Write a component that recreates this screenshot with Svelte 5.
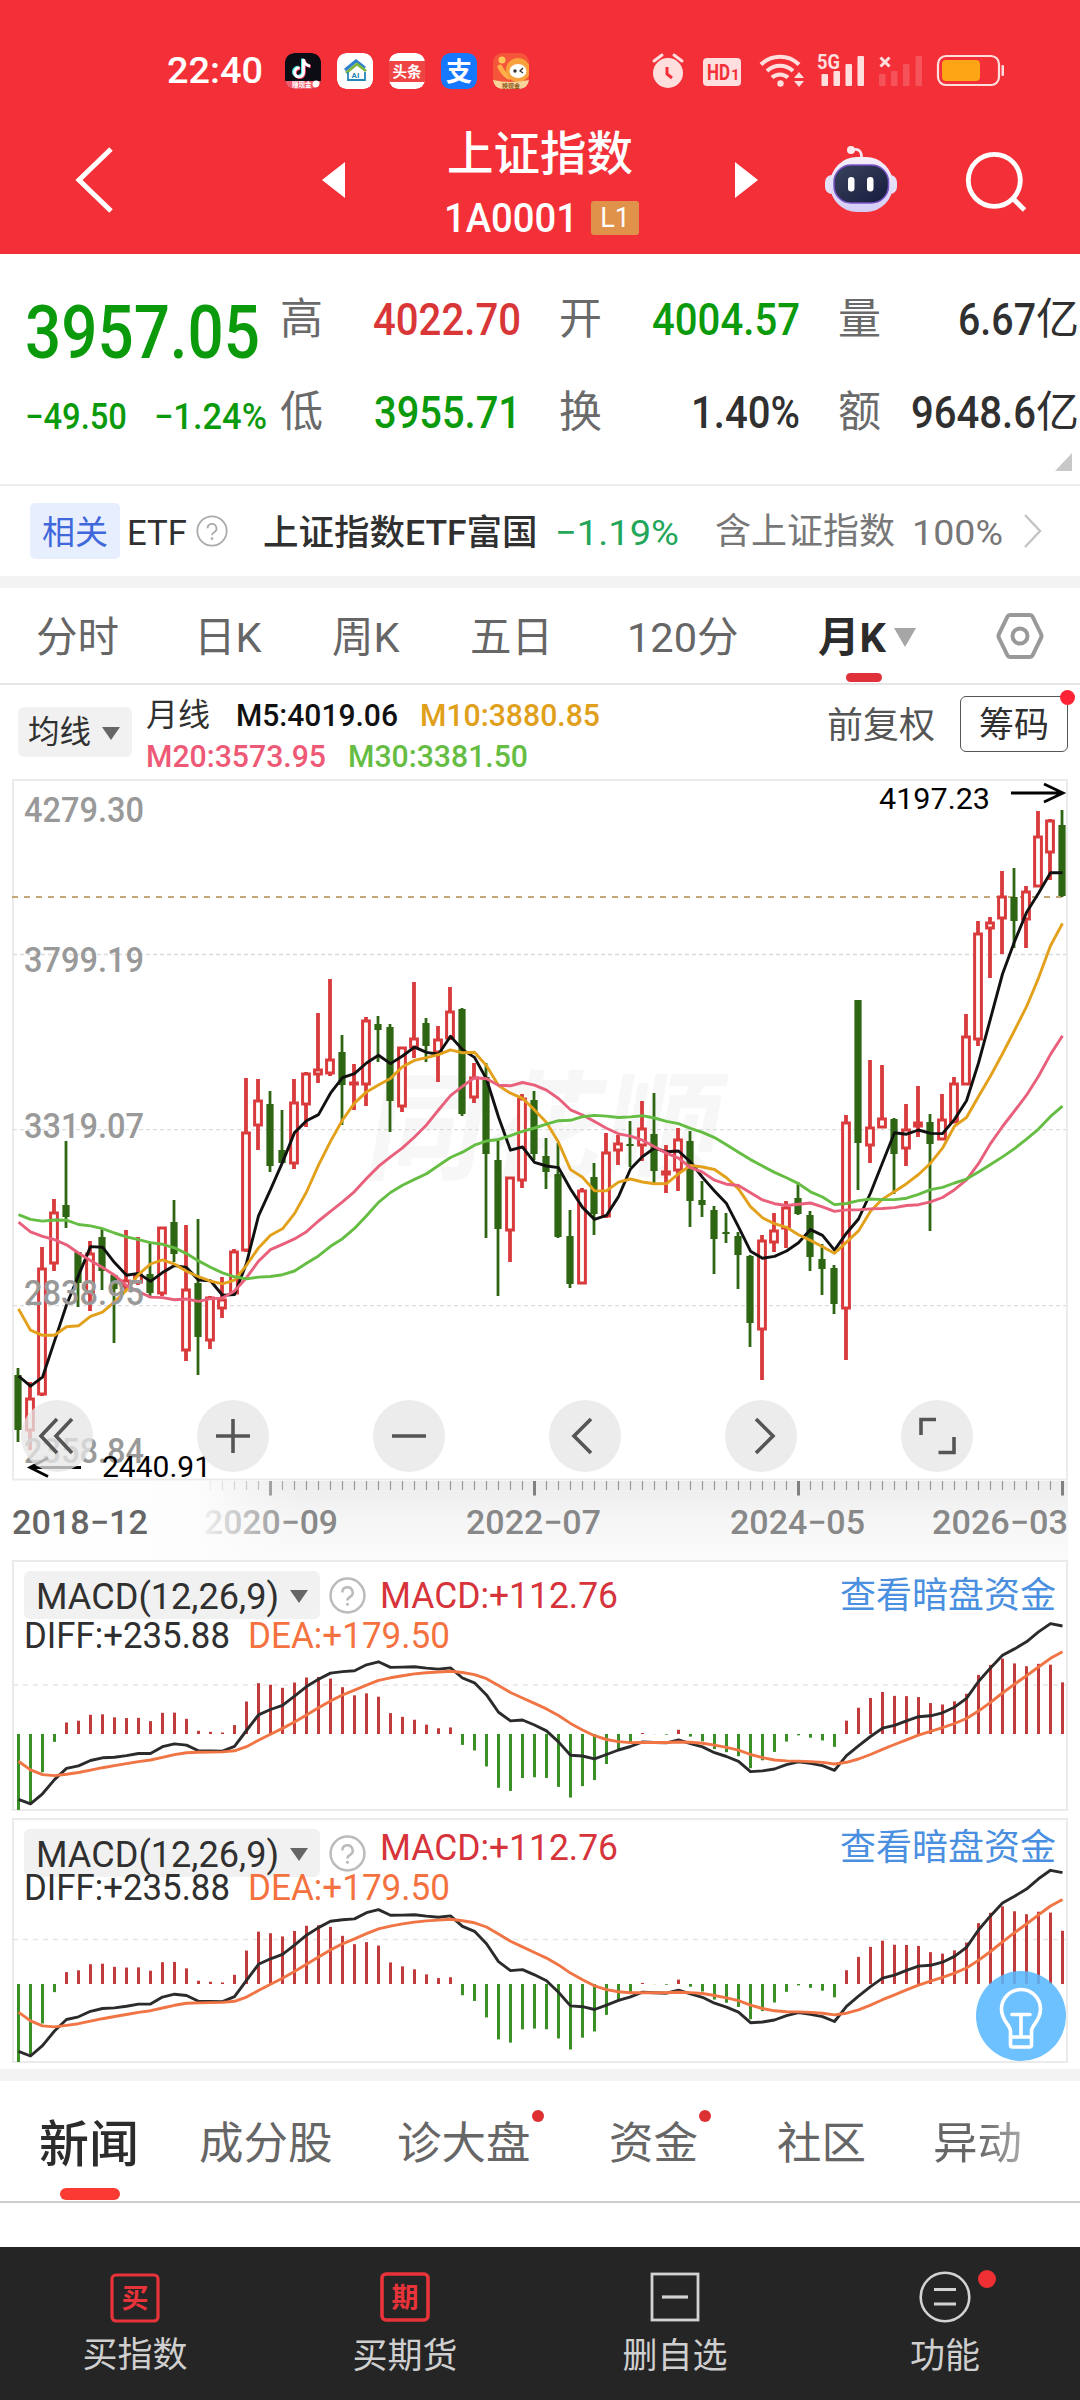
<!--
  Index quote page: header, quote summary, monthly candle chart with moving
  averages, two MACD panels and the bottom trade bar.

  Candles are kept in chart units (y grows downwards). Closes are turned into
  prices only where an indicator needs them.
-->
<script lang="ts">
  const STEP = 12;
  const X0 = 18;
  const GRID_PRICE = 3799.19;
  const GRID_Y = 954.4;
  const PER_PX = 2.7326;

  const toY = (p: number) => GRID_Y + (GRID_PRICE - p) / PER_PX;
  const toPrice = (y: number) => GRID_PRICE - (y - GRID_Y) * PER_PX;
  const xAt = (i: number) => X0 + i * STEP;

  // closes before the first visible month, needed to start the averages
  const history = [
    2979, 3085, 3004, 3100, 3250, 3103, 3159, 3241, 3222, 3154, 3117, 3192, 3273, 3360, 3348,
    3393, 3317, 3307, 3480, 3259, 3168, 3082, 3095, 2847, 2876, 2725, 2821, 2602, 2588,
  ];

  // direction, high, body top, body bottom, low
  const raw = `
    d 1368 1375 1430 1442|u 1382 1398 1430 1450|u 1247 1268 1394 1396|u 1199 1212 1263 1271
    d 1141 1205 1217 1228|d 1252 1252 1283 1307|u 1241 1253 1293 1311|d 1229 1237 1271 1290
    d 1275 1275 1289 1343|u 1230 1280 1286 1290|u 1237 1274 1282 1285|d 1243 1274 1293 1298
    u 1227 1227 1293 1296|d 1200 1222 1254 1262|u 1225 1289 1350 1361|d 1219 1283 1337 1375
    u 1296 1297 1340 1349|u 1277 1299 1308 1318|u 1249 1251 1293 1294|u 1078 1132 1250 1252
    u 1079 1100 1125 1150|d 1091 1104 1166 1172|d 1110 1150 1163 1163|u 1079 1102 1163 1169
    u 1072 1073 1104 1127|u 1013 1069 1074 1083|u 979 1059 1073 1076|d 1035 1052 1085 1125
    u 1064 1082 1084 1110|u 1017 1020 1084 1106|d 1016 1024 1030 1062|d 1024 1027 1101 1132
    u 1047 1047 1106 1112|u 982 1038 1047 1058|d 1018 1023 1046 1062|u 1026 1039 1052 1082
    u 987 1011 1038 1040|d 1008 1009 1114 1116|u 1063 1077 1097 1103|d 1063 1077 1154 1238
    d 1141 1160 1229 1296|u 1177 1177 1230 1262|u 1094 1098 1180 1188|d 1091 1100 1154 1160
    d 1138 1156 1172 1189|d 1143 1174 1237 1238|d 1210 1236 1284 1288|u 1188 1190 1283 1284
    d 1163 1177 1214 1235|u 1133 1152 1216 1218|u 1135 1143 1150 1165|d 1121 1144 1146 1167
    u 1101 1128 1145 1161|d 1093 1134 1171 1183|u 1145 1171 1174 1193|u 1128 1139 1170 1191
    d 1131 1141 1201 1227|d 1181 1200 1205 1217|d 1206 1210 1239 1274|d 1213 1232 1234 1243
    d 1232 1236 1255 1289|d 1255 1256 1323 1347|u 1235 1240 1329 1380|u 1213 1230 1242 1252
    u 1201 1207 1228 1248|d 1182 1198 1214 1215|d 1211 1215 1257 1271|d 1244 1259 1269 1295
    d 1265 1268 1304 1314|u 1115 1122 1308 1360|d 1000 1000 1143 1190|u 1060 1127 1145 1163
    u 1065 1118 1127 1128|d 1118 1119 1154 1194|u 1104 1129 1148 1166|u 1086 1122 1126 1137
    d 1114 1122 1144 1231|u 1094 1119 1139 1140|u 1077 1083 1122 1123|u 1014 1036 1084 1085
    u 921 933 1039 1046|u 917 922 928 978|u 871 896 918 954|d 868 897 921 948
    u 886 891 919 948|u 811 836 886 887|u 819 820 852 880|d 810 825 896 897`;

  const candles = raw
    .trim()
    .split(/\||\n/)
    .map((row) => {
      const [dir, ...n] = row.trim().split(' ');
      const [high, top, bottom, low] = n.map(Number);
      return { up: dir === 'u', high, top, bottom, low };
    });

  const closes = candles.map((c) => toPrice(c.up ? c.top : c.bottom));
  const all = [...history, ...closes];

  function average(period: number) {
    return closes
      .map((_, i) => {
        const end = history.length + i + 1;
        const sum = all.slice(end - period, end).reduce((a, b) => a + b, 0);
        return `${xAt(i) + 0.5},${toY(sum / period).toFixed(1)}`;
      })
      .join(' ');
  }

  const averages = [
    { color: '#111', points: average(5) },
    { color: '#e3a11b', points: average(10) },
    { color: '#e9607c', points: average(20) },
    { color: '#66bd43', points: average(30) },
  ];

  // MACD(12,26,9), seeded with the state of the first visible month
  let slow = 2989;
  let fast = slow - 142.6;
  let signal = -59.7;
  const macd = closes.map((c, i) => {
    if (i > 0) {
      fast += ((c - fast) * 2) / 13;
      slow += ((c - slow) * 2) / 27;
      signal += (fast - slow - signal) * 0.2;
    }
    return { diff: fast - slow, dea: signal, bar: (fast - slow - signal) * 2 };
  });

  const panels = [
    { height: 258, frame: 249, zero: 174, grid: 125, perPx: 2.184, tight: false },
    { height: 251, frame: 243, zero: 166, grid: 121.5, perPx: 2.12, tight: true },
  ];

  const line = (key: 'diff' | 'dea', zero: number, perPx: number) =>
    macd.map((m, i) => `${xAt(i) + 0.5},${(zero - m[key] / perPx).toFixed(1)}`).join(' ');

  const priceLabels = [
    { y: 822, text: '4279.30' },
    { y: 972, text: '3799.19' },
    { y: 1137.5, text: '3319.07' },
    { y: 1304.5, text: '2838.95' },
    { y: 1462.5, text: '2358.84' },
  ];

  const ticks = Array.from({ length: 72 }, (_, i) => i + 16);

  const stats = [
    { label: '高', value: '4022.70', width: 148, tone: 'up' },
    { label: '开', value: '4004.57', width: 148, tone: 'down' },
    { label: '量', value: '6.67', width: 78, unit: '亿', tone: '' },
    { label: '低', value: '3955.71', width: 147, tone: 'down' },
    { label: '换', value: '1.40%', width: 109, tone: '' },
    { label: '额', value: '9648.6', width: 125, unit: '亿', tone: '' },
  ];

  const periods = ['分时', '日K', '周K', '五日', '120分'];

  const news = [
    { text: '成分股', dot: false },
    { text: '诊大盘', dot: true },
    { text: '资金', dot: true },
    { text: '社区', dot: false },
    { text: '异动', dot: false },
  ];
</script>

<!-- digits set to a fixed width, caps centred in the box -->
{#snippet num(text: string, width: number)}
  <svg class="num" {width}>
    <text x="0" y="0.955em" textLength={width} lengthAdjust="spacingAndGlyphs">{text}</text>
  </svg>
{/snippet}

{#snippet help(size: number, stroke: number)}
  <svg class="help" width={size} height={size} viewBox="0 0 36 36">
    <circle cx="18" cy="18" r="16.5" fill="none" stroke="currentColor" stroke-width={stroke} />
    <path d="M13 15a5 5 0 1 1 7.5 4.3c-1.8 1-2.5 1.8-2.5 3.6" fill="none" stroke="currentColor" stroke-width={stroke} />
    <circle cx="18" cy="26.5" r="1.5" fill="currentColor" />
  </svg>
{/snippet}

<div class="page">
  <header>
    <div class="status">
      <span class="time">{@render num('22:40', 96)}</span>
      <div class="apps">
        <svg viewBox="0 0 36 36">
          <rect width="36" height="36" rx="9" fill="#0b0c14" />
          <path d="M0 28h36a9 9 0 0 1-9 8H9a9 9 0 0 1-9-8z" fill="#ef5a6d" />
          <path d="M18.5 6v13.5a4.5 4.5 0 1 1-4-4.5M18.5 7c1 4 3 5.5 6.5 6" transform="translate(-1 -.6)" fill="none" stroke="#45e5e6" stroke-width="3" />
          <path d="M18.5 6v13.5a4.5 4.5 0 1 1-4-4.5M18.5 7c1 4 3 5.5 6.5 6" transform="translate(.8 .6)" fill="none" stroke="#f3486d" stroke-width="3" />
          <path d="M18.5 6v13.5a4.5 4.5 0 1 1-4-4.5M18.5 7c1 4 3 5.5 6.5 6" fill="none" stroke="#fff" stroke-width="2.8" />
          <text x="7" y="34" font-size="6.5" font-weight="700" fill="#fff">赚现金</text>
          <circle cx="31" cy="31" r="3.5" fill="#fff" />
        </svg>
        <svg viewBox="0 0 36 36">
          <rect width="36" height="36" rx="9" fill="#fff" />
          <path d="M8 17 19 8l9 7" fill="none" stroke="#2d7fd0" stroke-width="3" />
          <path d="M9 20 20 11l9 7" fill="none" stroke="#7bb63c" stroke-width="2.8" />
          <path d="M11 19v8h17v-8" fill="none" stroke="#2485b8" stroke-width="1.8" />
          <text x="14.5" y="25" font-size="8" font-weight="700" fill="#2485b8">AI</text>
        </svg>
        <svg viewBox="0 0 36 36">
          <rect width="36" height="36" rx="9" fill="#fff" />
          <path d="M0 8h36v21H0z" fill="#ef4444" />
          <text x="3.5" y="23.5" font-size="14.5" font-weight="700" fill="#fff">头条</text>
        </svg>
        <svg viewBox="0 0 36 36">
          <rect width="36" height="36" rx="9" fill="#1677ff" />
          <text x="5" y="27.5" font-size="26" font-weight="700" fill="#fff">支</text>
        </svg>
        <svg viewBox="0 0 36 36">
          <rect width="36" height="36" rx="9" fill="#f5553a" />
          <circle cx="9" cy="7" r="3.5" fill="#ffc85a" />
          <path d="M7 14q4 8 9 10" stroke="#ffb04a" stroke-width="5" fill="none" stroke-linecap="round" />
          <circle cx="25" cy="17" r="12" fill="#f9a13c" />
          <ellipse cx="25" cy="18" rx="8.5" ry="7" fill="#fff" />
          <circle cx="22" cy="18" r="1.7" fill="#333" />
          <path d="m30 15-3 3 3 2" stroke="#333" stroke-width="1.3" fill="none" />
          <path d="M0 27q18 4 36 0a9 9 0 0 1-9 9H9a9 9 0 0 1-9-9z" fill="#f8d49a" />
          <text x="9" y="34.5" font-size="6" font-weight="700" fill="#8a5a20">换现金</text>
        </svg>
      </div>
      <svg class="signals" width="380" height="60" viewBox="0 0 380 60" fill="#ffdede">
        <circle cx="28" cy="33" r="15" />
        <path d="m14 21 8-6M34 15l8 6" stroke="#ffdede" stroke-width="3" stroke-linecap="round" />
        <path d="M27 27v7l5 4" fill="none" stroke="#f33038" stroke-width="3" />
        <rect x="63" y="18" width="38" height="28" rx="4" />
        <text x="67" y="40" font-size="22" font-weight="700" fill="#f33038" textLength="23" lengthAdjust="spacingAndGlyphs">HD</text>
        <text x="91" y="40" font-size="15" font-weight="700" fill="#f33038">1</text>
        <g fill="none" stroke="#ffdede" stroke-width="4">
          <path d="M121 24.5a27 27 0 0 1 38 0" />
          <path d="M127 31a19 19 0 0 1 26 0" />
          <path d="M132 37.5a12 12 0 0 1 16 0" />
        </g>
        <circle cx="140.5" cy="43.5" r="3.2" />
        <path d="M154 38h10l-5-6zM154 41h10l-5 6z" />
        <text x="177" y="29" font-size="21" font-weight="700" textLength="23" lengthAdjust="spacingAndGlyphs">5G</text>
        <rect x="181.5" y="34" width="6.5" height="12" rx="1" />
        <rect x="193.5" y="31" width="6.5" height="15" rx="1" />
        <rect x="205.5" y="24" width="6.5" height="22" rx="1" />
        <rect x="217.5" y="16" width="6.5" height="30" rx="1" />
        <path d="m240.500 17.500 9 9m0-9-9 9" stroke="#ffdede" stroke-width="3" />
        <g opacity="0.2">
          <rect x="239" y="34" width="6.500" height="12" rx="1" />
          <rect x="251" y="31" width="6.500" height="15" rx="1" />
          <rect x="263" y="24" width="6.500" height="22" rx="1" />
          <rect x="275.500" y="16" width="6.500" height="30" rx="1" />
        </g>
        <rect x="298" y="16" width="61" height="29" rx="8" fill="none" stroke="#ffdede" stroke-width="2.200" />
        <rect x="302" y="20" width="38" height="21" rx="4" fill="#fda514" />
        <rect x="361.500" y="25" width="2.500" height="11" rx="1" />
      </svg>
    </div>

    <nav>
      <svg class="back" width="50" height="70" viewBox="0 0 50 70">
        <path d="M41 4 9 35l32 31" fill="none" stroke="#fff" stroke-width="5" />
      </svg>
      <svg width="23" height="36" viewBox="0 0 23 36"><path d="M23 0v36L0 18z" fill="#fff" /></svg>
      <div class="title">
        <h1>上证指数</h1>
        <div class="code">{@render num('1A0001', 134)}<span class="level">L1</span></div>
      </div>
      <svg width="23" height="36" viewBox="0 0 23 36"><path d="M0 0v36l23-18z" fill="#fff" /></svg>
      <svg class="robot" width="80" height="100" viewBox="0 0 80 100">
        <defs>
          <linearGradient id="shell" x1="0" y1="0" x2="0" y2="1">
            <stop offset="0" stop-color="#f6f0fa" />
            <stop offset="1" stop-color="#d3cdf6" />
          </linearGradient>
          <linearGradient id="visor" x1="0" y1="0" x2="1" y2="1">
            <stop offset="0" stop-color="#39425f" />
            <stop offset="1" stop-color="#161c3c" />
          </linearGradient>
        </defs>
        <path d="M31 20q11-3 10.500 8" fill="none" stroke="#f3e6ee" stroke-width="2.800" />
        <circle cx="31" cy="20" r="4" fill="#fbe9ee" />
        <rect x="5" y="45" width="72" height="19" rx="7" fill="#e6e0f6" />
        <rect x="10" y="27" width="63" height="55" rx="27" fill="url(#shell)" />
        <rect x="14" y="35" width="54.500" height="38" rx="17" fill="url(#visor)" stroke="#7a55c8" stroke-width="1.500" />
        <rect x="28" y="47" width="6.500" height="14.500" rx="3.200" fill="#fff" />
        <rect x="47" y="47" width="6.500" height="14.500" rx="3.200" fill="#fff" />
      </svg>
      <svg class="search" width="66" height="100" viewBox="0 0 66 100" fill="none" stroke="#fff">
        <circle cx="32.300" cy="50.300" r="26" stroke-width="4.800" />
        <path d="m51.500 69 11 11" stroke-width="4.800" />
      </svg>
    </nav>
  </header>

  <section class="quote">
    <div class="last">
      <div class="price">{@render num('3957.05', 235)}</div>
      <div class="change">{@render num('−49.50', 102)}{@render num('−1.24%', 113)}</div>
    </div>
    <div class="stats">
      {#each stats as s}
        <div class="stat">
          <span class="label">{s.label}</span>
          <span class="value {s.tone}">{@render num(s.value, s.width)}{#if s.unit}<i>{s.unit}</i>{/if}</span>
        </div>
      {/each}
    </div>
    <svg class="corner" width="17" height="18" viewBox="0 0 17 18"><path d="M17 0v18H0z" fill="#c8c8c8" /></svg>
  </section>

  <section class="related">
    <span class="badge">相关</span>
    <span class="etf">{@render num('ETF', 60)}</span>
    {@render help(32, 2)}
    <span class="fund">上证指数ETF富国</span>
    <span class="pct">{@render num('−1.19%', 124)}</span>
    <span class="holds">含上证指数</span>
    <span class="share">{@render num('100%', 91)}</span>
    <svg class="more" width="20" height="36" viewBox="0 0 20 36">
      <path d="m2 2 15 16L2 34" fill="none" stroke="#c4c4c4" stroke-width="2.500" />
    </svg>
  </section>

  <div class="periods">
    {#each periods as p}
      <span>{p}</span>
    {/each}
    <span class="current">月K<svg width="24" height="19" viewBox="0 0 24 19"><path d="M1 0h22L12 19z" fill="#a6a6a6" /></svg></span>
    <svg class="settings" width="56" height="50" viewBox="0 0 56 50" fill="none" stroke="#999" stroke-width="4" stroke-linejoin="round">
      <path d="M18 4h20a3 3 0 0 1 2.500 1.500L49 23q1 2 0 4l-8.500 17.500A3 3 0 0 1 38 46H18a3 3 0 0 1-2.500-1.500L7 27q-1-2 0-4l8.500-17.500A3 3 0 0 1 18 4z" />
      <circle cx="28" cy="25" r="7.500" />
    </svg>
  </div>

  <div class="legend">
    <span class="pill">均线<svg width="18" height="13" viewBox="0 0 18 13"><path d="M0 0h18L9 13z" fill="#666" /></svg></span>
    <div class="averages">
      <div>
        <span class="name">月线</span>
        <span class="m5">{@render num('M5:4019.06', 162)}</span>
        <span class="m10">{@render num('M10:3880.85', 180)}</span>
      </div>
      <div>
        <span class="m20">{@render num('M20:3573.95', 180)}</span>
        <span class="m30">{@render num('M30:3381.50', 180)}</span>
      </div>
    </div>
    <span class="adjust">前复权</span>
    <span class="chips">筹码</span>
  </div>

  <div class="chart">
    <svg width="1080" height="782" viewBox="0 778 1080 782">
      <defs>
        <linearGradient id="axis" x1="0" y1="0" x2="0" y2="1">
          <stop offset="0" stop-color="#ececec" />
          <stop offset="0.5" stop-color="#f6f6f6" />
          <stop offset="1" stop-color="#fbfbfb" />
        </linearGradient>
        <linearGradient id="fade" x1="0" x2="1" y1="0" y2="0">
          <stop offset="0" stop-color="#fff" />
          <stop offset="0.64" stop-color="#fdfdfd" />
          <stop offset="1" stop-color="#fafafa" stop-opacity="0" />
        </linearGradient>
      </defs>

      <text class="watermark" x="0" y="0" transform="translate(362 1170) skewX(-10)">同花顺</text>

      <rect x="13" y="780" width="1054" height="699.500" fill="none" stroke="#ebebeb" stroke-width="2" />
      {#each [954.5, 1129.7, 1305.7] as y}
        <line x1="13" x2="1066" y1={y} y2={y} stroke="#dcdcdc" stroke-width="1.300" stroke-dasharray="4 3" />
      {/each}
      <line x1="12" x2="1066" y1="897" y2="897" stroke="#c2a878" stroke-width="1.800" stroke-dasharray="6 6" />

      {#each candles as c, i}
        {#if c.up}
          <path d="M{xAt(i)} {c.high}V{c.top}M{xAt(i)} {c.bottom}V{c.low}" stroke="#d93a3c" stroke-width="3.800" />
          <rect x={xAt(i) - 3.4} y={c.top + 1} width="6.800" height={Math.max(c.bottom - c.top - 1, 1)} fill="#fff" stroke="#d93a3c" stroke-width="3" />
        {:else}
          <path d="M{xAt(i)} {c.high}V{c.low}" stroke="#2f6613" stroke-width="2.800" />
          <rect x={xAt(i) - 3.6} y={c.top} width="7.200" height={c.bottom - c.top} fill="#2f6613" />
        {/if}
      {/each}

      {#each averages as a}
        <polyline points={a.points} fill="none" stroke={a.color} stroke-width="2.900" stroke-linejoin="round" />
      {/each}

      {#each priceLabels as l}
        <text class="tick" x="24" y={l.y} textLength="120" lengthAdjust="spacingAndGlyphs">{l.text}</text>
      {/each}

      <text class="extreme" x="879" y="809" textLength="111" lengthAdjust="spacingAndGlyphs">4197.23</text>
      <path d="M1011 793h51M1044 784l19 9-19 9" fill="none" stroke="#000" stroke-width="2.800" />
      <text class="extreme" x="102" y="1476.500" textLength="109" lengthAdjust="spacingAndGlyphs">2440.91</text>
      <path d="M81 1467.500H31M48 1458l-18 9.500 18 9" fill="none" stroke="#000" stroke-width="2.800" />

      <rect x="12" y="1481" width="1056" height="79" fill="url(#axis)" />
      {#each ticks as i}
        {#if i % 22 === 21}
          <line x1={xAt(i) + 0.5} x2={xAt(i) + 0.5} y1="1481" y2="1495.500" stroke="#808080" stroke-width="3" />
        {:else}
          <line x1={xAt(i) + 0.5} x2={xAt(i) + 0.5} y1="1481" y2="1490" stroke="#999" stroke-width="1.200" />
        {/if}
      {/each}
      <text class="date" x="204" y="1533.500" textLength="134" lengthAdjust="spacingAndGlyphs">2020−09</text>
      <text class="date" x="466" y="1533.500" textLength="135" lengthAdjust="spacingAndGlyphs">2022−07</text>
      <text class="date" x="730" y="1533.500" textLength="135" lengthAdjust="spacingAndGlyphs">2024−05</text>
      <text class="date" x="932" y="1533.500" textLength="136" lengthAdjust="spacingAndGlyphs">2026−03</text>
      <rect x="0" y="1481" width="300" height="79" fill="url(#fade)" />
      <text class="date first" x="12" y="1533.500" textLength="136" lengthAdjust="spacingAndGlyphs">2018−12</text>
    </svg>

    <div class="tools">
      <button aria-label="最早"><svg viewBox="0 0 72 72"><path d="M36 19 20 36l16 17M51 19 35 36l16 17" /></svg></button>
      <button aria-label="放大"><svg viewBox="0 0 72 72"><path d="M19 36h34M36 19v34" /></svg></button>
      <button aria-label="缩小"><svg viewBox="0 0 72 72"><path d="M19 36h34" /></svg></button>
      <button aria-label="左移"><svg viewBox="0 0 72 72"><path d="M42 19 25 36l17 17" /></svg></button>
      <button aria-label="右移"><svg viewBox="0 0 72 72"><path d="m31 19 17 17-17 17" /></svg></button>
      <button aria-label="全屏"><svg viewBox="0 0 72 72"><path d="M35 19.500H20V35M37.500 52.500H53V37" /></svg></button>
    </div>
  </div>

  {#each panels as p}
    <section class="panel" class:tight={p.tight} style:height="{p.height}px">
      <svg class="plot" width="1080" height={p.height}>
        <rect x="13" y="1" width="1054" height={p.frame} fill="none" stroke="#ebebeb" stroke-width="2" />
        <line x1="13" x2="1066" y1={p.grid} y2={p.grid} stroke="#e6e6e6" stroke-width="1.300" stroke-dasharray="5 5" />
        {#each macd as m, i}
          <line
            x1={xAt(i) + 0.5}
            x2={xAt(i) + 0.5}
            y1={p.zero}
            y2={Math.min(p.zero - m.bar / p.perPx, p.frame + 1)}
            stroke={m.bar > 0 ? '#c13b3d' : '#3b8f27'}
            stroke-width="3"
          />
        {/each}
        <polyline points={line('diff', p.zero, p.perPx)} fill="none" stroke="#2b2b2b" stroke-width="2.900" stroke-linejoin="round" />
        <polyline points={line('dea', p.zero, p.perPx)} fill="none" stroke="#f07444" stroke-width="2.900" stroke-linejoin="round" />
      </svg>
      <div class="head">
        <span class="pill">{@render num('MACD(12,26,9)', 243)}<svg width="18" height="13" viewBox="0 0 18 13"><path d="M0 0h18L9 13z" fill="#666" /></svg></span>
        {@render help(37, 2.4)}
        <span class="macd">{@render num('MACD:+112.76', 238)}</span>
        <a href="#dark">查看暗盘资金</a>
      </div>
      <div class="values">
        <span>{@render num('DIFF:+235.88', 206)}</span>
        <span class="dea">{@render num('DEA:+179.50', 202)}</span>
      </div>
      {#if p.tight}
        <div class="bulb">
          <svg width="90" height="90" viewBox="0 0 90 90" fill="none" stroke="#fff" stroke-width="3.600" stroke-linecap="round" stroke-linejoin="round">
            <path d="M34.500 74V60c0-6-9-10-9-22a19.500 19.500 0 0 1 39 0c0 12-9 16-9 22v14a2 2 0 0 1-2 2h-17a2 2 0 0 1-2-2zM35 66h20M36 43.500h18M45 44v21" />
          </svg>
        </div>
      {/if}
    </section>
  {/each}

  <div class="news">
    <span class="current">新闻</span>
    {#each news as n}
      <span class:dot={n.dot}>{n.text}</span>
    {/each}
  </div>

  <footer>
    <div>
      <svg class="low" width="50" height="52" viewBox="0 0 50 52">
        <rect x="2" y="4" width="46" height="46" rx="4" fill="none" stroke="#e8333a" stroke-width="3.200" />
        <text x="11.500" y="37" font-size="27" font-weight="700" fill="#e8333a">买</text>
      </svg>
      <span>买指数</span>
    </div>
    <div>
      <svg width="50" height="52" viewBox="0 0 50 52">
        <rect x="2" y="3" width="46" height="46" rx="4" fill="none" stroke="#e8333a" stroke-width="3.600" />
        <text x="11.500" y="36" font-size="27" font-weight="700" fill="#e8333a">期</text>
      </svg>
      <span>买期货</span>
    </div>
    <div>
      <svg width="50" height="52" viewBox="0 0 50 52" fill="none" stroke="#d2d2d2">
        <rect x="2" y="3" width="46" height="46" stroke-width="2.800" />
        <path d="M12 26h26" stroke-width="3.200" />
      </svg>
      <span>删自选</span>
    </div>
    <div class="dot">
      <svg width="52" height="52" viewBox="0 0 52 52" fill="none" stroke="#d2d2d2">
        <circle cx="26" cy="26" r="24.300" stroke-width="2.600" />
        <path d="M15 18.500h22M15 33h22" stroke-width="3.200" />
      </svg>
      <span>功能</span>
    </div>
  </footer>
</div>

<style>
  :global(body) {
    background: #fff;
  }
  .page {
    width: 1080px;
    height: 2400px;
    overflow: hidden;
    background: #fff;
    color: #303030;
    font-family: Roboto, 'Noto Sans CJK SC', sans-serif;
    line-height: 1.2;
  }
  .page * { box-sizing: border-box; }
  svg { flex: none; display: block; }
  span, a, h1 { white-space: nowrap; }
  .num {
    height: 1.2em;
    overflow: visible;
    fill: currentColor;
  }

  header {
    height: 254px;
    background: #f33038;
    color: #fff;
  }
  .status {
    height: 106px;
    padding: 34px 0 0 167px;
    display: flex;
    align-items: center;
  }
  .time { font-size: 37px; font-weight: 500; }
  .apps {
    display: flex;
    gap: 16px;
    margin: 2px 0 0 22px;
    width: 355px;
  }
  .apps svg { width: 36px; height: 36px; border-radius: 9px; overflow: hidden; }
  nav {
    height: 148px;
    display: flex;
    align-items: center;
    padding-left: 70px;
  }
  .back { margin-right: 202px; }
  .title {
    width: 390px;
    display: flex;
    flex-direction: column;
    align-items: center;
    gap: 14px;
    padding-top: 5px;
  }
  h1 {
    margin: 0;
    font-size: 46.5px;
    font-weight: 500;
    line-height: 56px;
  }
  .code {
    display: flex;
    align-items: center;
    gap: 13px;
    height: 44px;
    padding-left: 3px;
    font-size: 41px;
    font-weight: 500;
  }
  .level {
    width: 48px;
    height: 34px;
    border-radius: 3px;
    background: #e0914a;
    font-size: 27px;
    font-weight: 400;
    line-height: 34px;
    text-align: center;
  }
  .robot { margin-left: 62px; }
  .search { margin-left: 62px; }

  .quote {
    position: relative;
    height: 232px;
    display: flex;
    border-bottom: 2px solid #ededed;
  }
  .last {
    width: 281px;
    padding: 34px 0 0 25px;
    color: #0b9a0b;
    font-weight: 500;
  }
  .price {
    height: 86px;
    display: flex;
    align-items: center;
    font-size: 74px;
  }
  .change {
    height: 86px;
    display: flex;
    align-items: center;
    gap: 27px;
    font-size: 36px;
  }
  .stats {
    display: grid;
    grid-template-columns: repeat(3, 241px);
    grid-auto-rows: 93px;
    column-gap: 38px;
    padding-top: 18px;
    margin-left: -1px;
  }
  .stat {
    display: flex;
    align-items: center;
    justify-content: space-between;
  }
  .stat .label { padding-top: 3px; font-size: 43px; color: #6a6a6a; }
  .value {
    display: flex;
    align-items: center;
    font-size: 45px;
    font-weight: 500;
  }
  .value i { padding-top: 3px; font-style: normal; font-size: 43px; font-weight: 400; }
  .up { color: #d93638; }
  .down { color: #0b9a0b; }
  .corner { position: absolute; right: 8px; bottom: 13px; }

  .related {
    height: 90px;
    display: flex;
    align-items: center;
    padding-left: 30px;
    font-size: 35.5px;
  }
  .badge {
    width: 90px;
    height: 56px;
    border-radius: 5px;
    background: #e7eefe;
    color: #3f68dc;
    font-size: 33px;
    line-height: 59px;
    text-align: center;
  }
  .etf { margin-left: 7px; padding-top: 2px; }
  .related .help { margin-left: 9px; color: #aaa; }
  .fund { margin-left: 35px; padding-top: 4px; width: 275px; font-weight: 500; font-size: 35.5px; }
  .pct { margin-left: 17px; padding-top: 2px; color: #23a659; }
  .holds { margin-left: 36px; padding-top: 4px; color: #777; font-size: 36px; }
  .share { margin-left: 17px; padding-top: 2px; color: #777; }
  .more { margin-left: 20px; }

  .periods {
    height: 109px;
    border-top: 12px solid #f3f3f3;
    border-bottom: 2px solid #e6e6e6;
    display: grid;
    grid-template-columns: 158px 138px 138px 157px 190px 169px auto;
    align-items: center;
    padding-left: 36px;
    color: #666;
    font-size: 41.5px;
  }
  .periods span { padding-top: 5px; }
  .periods .current {
    position: relative;
    display: flex;
    align-items: center;
    gap: 7px;
    padding-left: 1px;
    color: #2c2c2c;
    font-weight: 700;
  }
  .periods .current::after {
    content: '';
    position: absolute;
    left: 29px;
    top: 65px;
    width: 36px;
    height: 9px;
    border-radius: 5px;
    background: #e0303a;
  }
  .settings { margin-left: 6px; }

  .legend {
    height: 93px;
    display: flex;
    align-items: flex-start;
    padding-left: 18px;
  }
  .pill {
    display: flex;
    align-items: center;
    justify-content: center;
    border-radius: 6px;
    background: #f1f1f1;
    color: #303030;
  }
  .legend .pill {
    width: 114px;
    height: 50px;
    margin-top: 22px;
    padding: 2px 2px 0 0;
    gap: 11px;
    font-size: 31.5px;
  }
  .averages {
    width: 681px;
    margin-left: 14px;
    padding-top: 9px;
    font-size: 32px;
    font-weight: 500;
  }
  .averages div { display: flex; align-items: center; height: 41px; }
  .name { padding-top: 2px; font-weight: 400; }
  .m5 { margin-left: 26px; color: #111; }
  .m10 { margin-left: 22px; color: #e0a01b; }
  .m20 { color: #ee5a76; }
  .m30 { margin-left: 22px; color: #66bd43; }
  .adjust {
    margin-top: 14px;
    line-height: 54px;
    font-size: 36px;
    color: #555;
  }
  .chips {
    position: relative;
    width: 108px;
    height: 56px;
    margin: 11px 12px 0 auto;
    border: 1.5px solid #555;
    border-radius: 6px;
    font-size: 35px;
    line-height: 58px;
    text-align: center;
  }
  .chips::after {
    content: '';
    position: absolute;
    top: -7px;
    right: -8px;
    width: 15px;
    height: 15px;
    border-radius: 50%;
    background: #ff2435;
  }

  .chart { position: relative; height: 782px; }
  .watermark { font-size: 118px; font-weight: 700; fill: #f7f7f7; }
  .tick { font-size: 35px; font-weight: 500; fill: #999; }
  .extreme { font-size: 29.5px; fill: #000; }
  .date { font-size: 34px; font-weight: 500; fill: #888; }
  .first { fill: #666; }
  .tools {
    position: absolute;
    left: 21px;
    top: 622px;
    display: flex;
    gap: 104px;
  }
  .tools button {
    width: 72px;
    height: 72px;
    padding: 0;
    border: 0;
    border-radius: 50%;
    background: rgba(230, 230, 230, 0.76);
  }
  .tools path { fill: none; stroke: #555; stroke-width: 3.6; }

  .panel { position: relative; padding: 11px 24px 0 24px; }
  .plot { position: absolute; left: 0; top: 0; }
  .head {
    position: relative;
    display: flex;
    align-items: center;
    height: 48px;
    font-size: 37px;
  }
  .head .pill { width: 296px; height: 48px; gap: 11px; padding: 2px 1px 0 0; }
  .head .help { margin-left: 9px; color: #bbb; }
  .macd { margin-left: 14px; color: #d6333a; }
  .head a {
    margin-left: auto;
    padding-top: 4px;
    color: #4a8fe0;
    font-size: 36px;
    text-decoration: none;
  }
  .values {
    position: relative;
    display: flex;
    gap: 18px;
    margin-top: -6px;
    font-size: 37px;
  }
  .dea { color: #f4723f; }
  .tight .macd, .tight a { margin-top: -12px; }
  .tight .values { margin-top: -12px; }
  .bulb {
    position: absolute;
    left: 976px;
    top: 153px;
    width: 90px;
    height: 90px;
    border-radius: 50%;
    background: rgba(88, 184, 255, 0.87);
  }

  .news {
    height: 134px;
    border-top: 12px solid #f3f3f3;
    border-bottom: 2px solid #c9cdcc;
    display: grid;
    grid-template-columns: 160px 198px 212px 168px 156px auto;
    align-items: center;
    padding: 8px 0 0 39px;
    color: #666;
    font-size: 44.5px;
  }
  .news span { position: relative; justify-self: start; }
  .news .current { font-size: 50px; font-weight: 500; color: #2c2c2c; }
  .news .current::after {
    content: '';
    position: absolute;
    left: 21px;
    top: 73px;
    width: 60px;
    height: 12px;
    border-radius: 6px;
    background: #fb3b33;
  }
  .news .dot::after {
    content: '';
    position: absolute;
    right: -13px;
    top: -8px;
    width: 12px;
    height: 12px;
    border-radius: 50%;
    background: #dd3033;
  }
  .news span:last-child {
    background: linear-gradient(90deg, #666 50%, #aaa);
    background-clip: text;
    color: transparent;
  }

  footer {
    height: 154px;
    margin-top: 44px;
    background: #252525;
    color: #cfcfcf;
    display: grid;
    grid-template-columns: repeat(4, 270px);
    font-size: 35px;
  }
  footer div {
    position: relative;
    display: flex;
    flex-direction: column;
    align-items: center;
    padding-top: 24px;
    gap: 13px;
  }
  footer .low + span { margin-top: -1px; }
  footer .dot::after {
    content: '';
    position: absolute;
    left: 168px;
    top: 23px;
    width: 18px;
    height: 18px;
    border-radius: 50%;
    background: #ee2f33;
  }
</style>
